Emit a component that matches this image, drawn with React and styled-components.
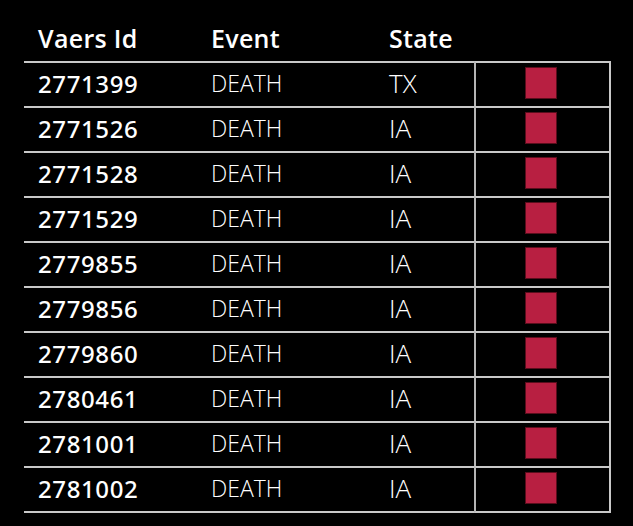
import React from "react";
import styled, { createGlobalStyle } from "styled-components";

const Global = createGlobalStyle`
  html, body { margin: 0; padding: 0; background: #000; }
  body { font-family: "Open Sans", "Noto Sans", sans-serif; color: #fff; }
`;

const Page = styled.div`
  width: 633px;
  height: 526px;
  background: #000;
  padding: 0 0 0 24px;
  box-sizing: border-box;
`;

const Table = styled.div`
  width: 587px;
  display: grid;
  grid-template-columns: 173px 178px 99px 137px;
`;

const HeadCell = styled.div`
  height: 61px;
  box-sizing: border-box;
  padding: 22px 0 0 14px;
  font-size: 25px;
  font-weight: 600;
  line-height: 32px;
  color: #fff;
  letter-spacing: 0.3px;
`;

const sizes = { id: "24px", event: "23px", state: "26px" };
const weights = { id: 500, event: 300, state: 300 };
const spacing = { id: "0.6px", event: "0", state: "0" };
const families = {
  id: `"Noto Sans", "Open Sans", sans-serif`,
  event: `"Open Sans", sans-serif`,
  state: `"Open Sans", sans-serif`,
};

const Cell = styled.div`
  height: 45px;
  box-sizing: border-box;
  border-top: 2px solid #c9c9c9;
  ${(p) => (p.$last ? "border-bottom: 2px solid #c9c9c9; height: 47px;" : "")}
  display: flex;
  align-items: center;
  padding-left: 14px;
  font-family: ${(p) => families[p.$kind]};
  font-size: ${(p) => sizes[p.$kind]};
  font-weight: ${(p) => weights[p.$kind]};
  letter-spacing: ${(p) => spacing[p.$kind]};
  color: #fff;
  padding-bottom: 3px;
`;

const MarkCell = styled.div`
  height: 45px;
  box-sizing: border-box;
  border-top: 2px solid #c9c9c9;
  ${(p) => (p.$last ? "border-bottom: 2px solid #c9c9c9; height: 47px;" : "")}
  border-left: 2px solid #b4b4b4;
  border-right: 2px solid #c9c9c9;
  display: flex;
  align-items: center;
  justify-content: center;
  padding-bottom: 4px;
  padding-right: 4px;
`;

const Mark = styled.div`
  width: 30px;
  height: 30px;
  background: #b81f41;
  border: 1px solid #5a0d1c;
`;

const ids = [
  "2771399",
  "2771526",
  "2771528",
  "2771529",
  "2779855",
  "2779856",
  "2779860",
  "2780461",
  "2781001",
  "2781002",
];

export default function App() {
  return (
    <Page>
      <Global />
      <Table>
        <HeadCell>Vaers Id</HeadCell>
        <HeadCell>Event</HeadCell>
        <HeadCell>State</HeadCell>
        <HeadCell />
        {ids.map((id, i) => {
          const last = i === ids.length - 1;
          return (
            <React.Fragment key={id}>
              <Cell $kind="id" $last={last}>{id}</Cell>
              <Cell $kind="event" $last={last}>DEATH</Cell>
              <Cell $kind="state" $last={last}>{i === 0 ? "TX" : "IA"}</Cell>
              <MarkCell $last={last}>
                <Mark />
              </MarkCell>
            </React.Fragment>
          );
        })}
      </Table>
    </Page>
  );
}
